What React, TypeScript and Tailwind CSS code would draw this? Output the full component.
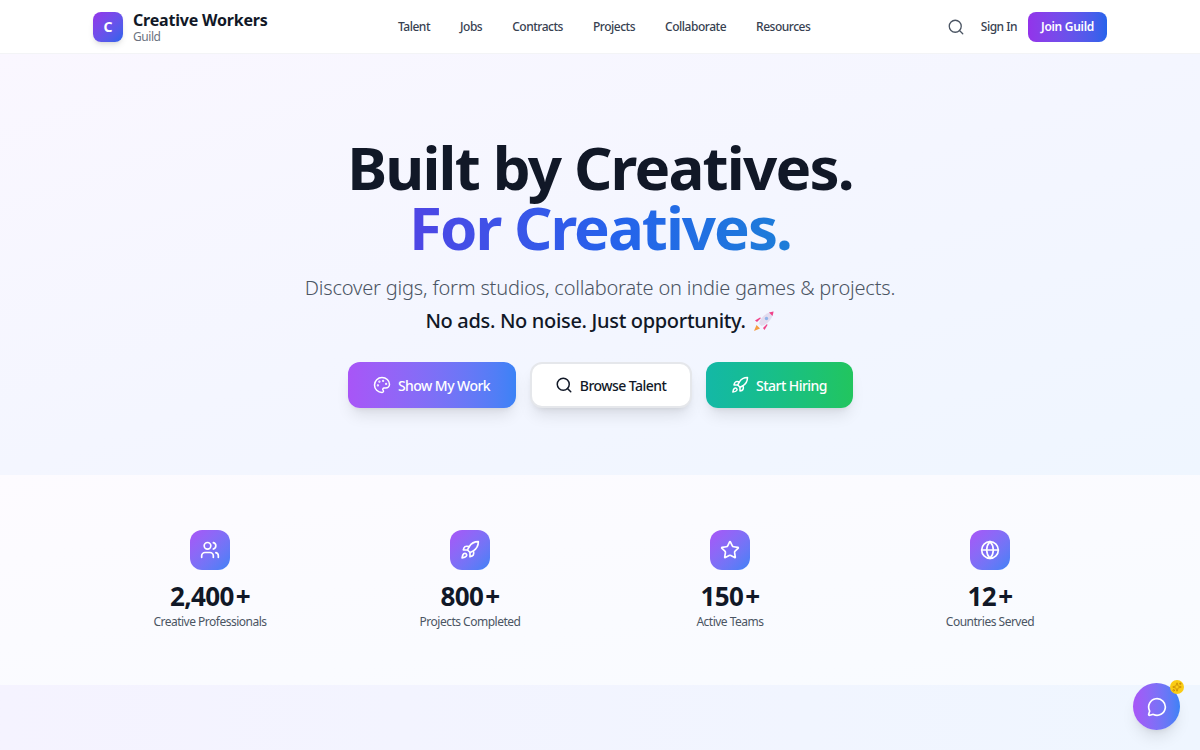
import { Search, Palette, Rocket, Users, Star, Globe, MessageCircle, Sparkles } from "lucide-react";

const nav = ["Talent", "Jobs", "Contracts", "Projects", "Collaborate", "Resources"];
const stats = [
  { icon: Users, value: "2,400", label: "Creative Professionals" },
  { icon: Rocket, value: "800", label: "Projects Completed" },
  { icon: Star, value: "150", label: "Active Teams" },
  { icon: Globe, value: "12", label: "Countries Served" },
];

function RocketEmoji() {
  return (
    <svg viewBox="0 0 22 22" className="ml-[7px] h-[22px] w-[22px]">
      <path d="M1 21l2.500-6 3.500 3.500z" fill="#f59e42" />
      <path d="M4 12l4-4-1-.5-5 3z" fill="#f0438a" />
      <path d="M10 18l4-4 .5 1-3 5z" fill="#f0438a" />
      <path d="M6 13.500C8 7 13 2.500 20.500 1.500 19.500 9 15 14 8.500 16z" fill="#e3dcee" />
      <path d="M16 2.500c1.500-.500 3-.800 4.500-1-.200 1.500-.500 3-1 4.500z" fill="#f0438a" />
      <circle cx="13.500" cy="8.500" r="1.700" fill="#8fb4ea" />
    </svg>
  );
}

export default function App() {
  return (
    <div className="relative h-[750px] w-[1200px] overflow-hidden bg-white font-['Noto_Sans',sans-serif]">
      <header className="flex h-[54px] items-center border-b border-[#f3f4f6] bg-white pl-[93px] pr-[93px]">
        <div className="flex w-[305px] items-center gap-[10px]">
          <div className="flex h-[30px] w-[30px] items-center justify-center rounded-lg bg-gradient-to-br from-[#9333ea] to-[#2563eb] text-sm font-bold text-white shadow-md">C</div>
          <div className="flex flex-col">
            <span className="text-[16px] font-bold leading-[18px] tracking-[-0.2px] text-[#111827]">Creative Workers</span>
            <span className="mt-[1px] text-[12px] leading-[13px] tracking-[-0.45px] text-[#6b7280]">Guild</span>
          </div>
        </div>
        <nav className="flex items-center gap-[30px] text-[12px] font-medium tracking-[-0.48px] text-[#374151]">
          {nav.map((n) => (
            <span key={n}>{n}</span>
          ))}
        </nav>
        <div className="ml-auto flex items-center">
          <Search className="h-[18px] w-[18px] text-[#4b5563]" strokeWidth={1.75} />
          <span className="ml-[16px] text-[12px] font-medium tracking-[-0.5px] text-[#374151]">Sign In</span>
          <span className="ml-[11px] flex h-[30px] w-[79px] items-center justify-center rounded-lg bg-gradient-to-r from-[#9333ea] to-[#2563eb] text-[12px] font-semibold tracking-[-0.3px] text-white">Join Guild</span>
        </div>
      </header>

      <section className="flex h-[421px] flex-col items-center bg-gradient-to-br from-[#faf7ff] via-[#f4f6ff] to-[#eff6ff] pt-[83px]">
        <h1 className="text-center text-[60px] font-bold leading-[60px] tracking-[-1.8px] text-[#111827]">
          Built by Creatives.
          <br />
          <span className="bg-clip-text tracking-[-2px] text-transparent [background-image:linear-gradient(90deg,#4f46e5,#2563eb_55%,#1d7ed8)]">For Creatives.</span>
        </h1>
        <p className="mt-[17px] text-[20px] font-light leading-[28px] tracking-[-0.19px] text-[#4b5563]">Discover gigs, form studios, collaborate on indie games &amp; projects.</p>
        <div className="mt-[5px] flex items-center text-[20px] font-medium leading-[28px] tracking-[-0.33px] text-[#111827]">
          No ads. No noise. Just opportunity.
          <RocketEmoji />
        </div>
        <div className="mt-[27px] flex items-center gap-[14px]">
          <span className="flex h-[46px] w-[168px] items-center justify-center gap-[7px] rounded-xl bg-gradient-to-r from-[#a855f7] to-[#3b82f6] text-[14px] font-medium tracking-[-0.55px] text-white shadow-lg">
            <Palette className="h-[18px] w-[18px]" />
            Show My Work
          </span>
          <span className="flex h-[46px] w-[162px] items-center justify-center gap-[7px] rounded-xl border-2 border-[#e5e7eb] bg-white text-[14px] font-medium tracking-[-0.55px] text-[#111827] shadow-lg">
            <Search className="h-[18px] w-[18px]" />
            Browse Talent
          </span>
          <span className="flex h-[46px] w-[147px] items-center justify-center gap-[7px] rounded-xl bg-gradient-to-r from-[#14b8a6] to-[#22c55e] text-[14px] font-medium tracking-[-0.55px] text-white shadow-lg">
            <Rocket className="h-[18px] w-[18px]" />
            Start Hiring
          </span>
        </div>
      </section>

      <section className="grid h-[210px] grid-cols-4 bg-gradient-to-br from-[#fdfbff] to-[#f8fbff] px-[80px] pt-[55px]">
        {stats.map((s) => (
          <div key={s.label} className="flex flex-col items-center">
            <div className="flex h-10 w-10 items-center justify-center rounded-xl bg-gradient-to-br from-[#a855f7] to-[#3b82f6] text-white">
              <s.icon className="h-5 w-5" />
            </div>
            <div className="mt-[10px] flex items-center text-[26px] font-bold leading-[32px] tracking-[-0.6px] text-[#111827]">
              {s.value}
              <span className="ml-[2px]">+</span>
            </div>
            <div className="mt-[1px] text-[12px] leading-[18px] tracking-[-0.5px] text-[#4b5563]">{s.label}</div>
          </div>
        ))}
      </section>

      <section className="h-[65px] bg-gradient-to-r from-[#f5f3ff] to-[#eff6ff]" />

      <div className="absolute left-[1133px] top-[683px] flex h-[47px] w-[47px] items-center justify-center rounded-full bg-gradient-to-r from-[#a855f7] to-[#3b82f6] text-white shadow-lg">
        <MessageCircle className="h-5 w-5" />
        <span className="absolute right-[-4px] top-[-3px] flex h-[14px] w-[14px] items-center justify-center rounded-full bg-[#facc15] text-[#ca8a04]">
          <Sparkles className="h-[10px] w-[10px]" />
        </span>
      </div>
    </div>
  );
}
